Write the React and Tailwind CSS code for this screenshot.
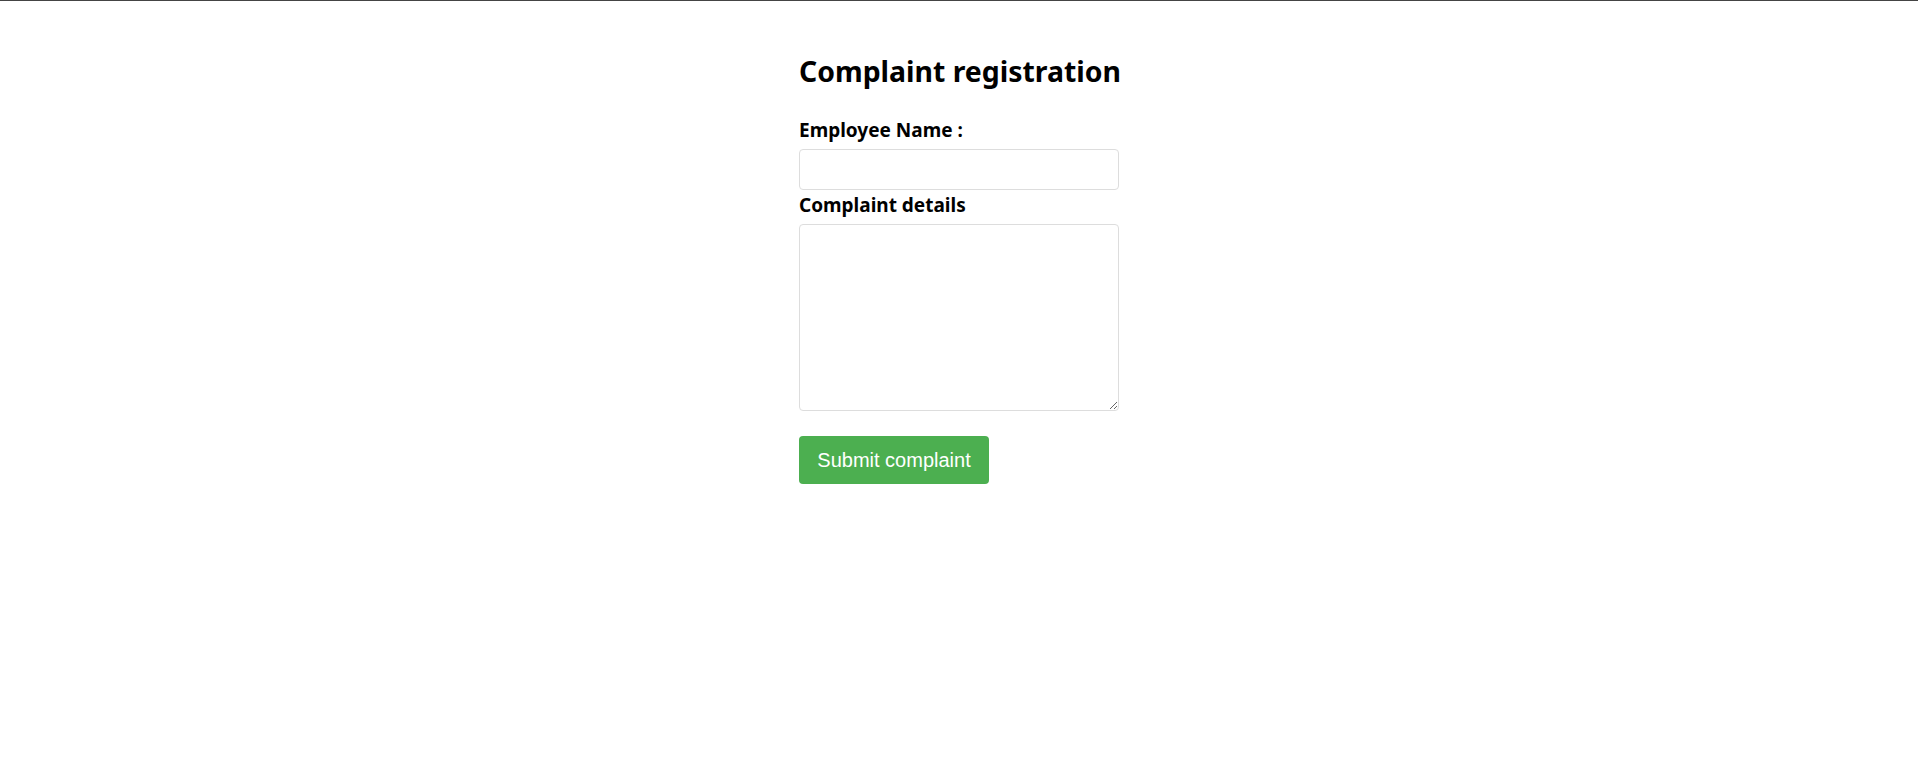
import React, { useState } from "react";

const ComplaintForm = () => {
  const [form, setForm] = useState({ name: "", details: "" });

  const handleSubmit = (e) => {
    e.preventDefault();
  };

  return (
    <div className="min-h-screen bg-white border-t border-[#444444]">
      <form
        onSubmit={handleSubmit}
        className="w-[320px] mx-auto pt-[50px] flex flex-col"
        style={{ fontFamily: '"Noto Sans", "Open Sans", sans-serif' }}
      >
        <h2 className="text-[28.4px] leading-[40px] font-bold text-black mb-[27px] whitespace-nowrap">
          Complaint registration
        </h2>

        <label className="text-[19px] leading-[24px] font-bold text-black">
          Employee Name :
        </label>
        <input
          value={form.name}
          onChange={(e) => setForm({ ...form, name: e.target.value })}
          className="w-full h-[41px] mt-[7px] border border-[#dddddd] rounded-[4px] px-2 outline-none"
        />

        <label className="text-[19px] leading-[24px] font-bold text-black mt-[3px]">
          Complaint details
        </label>
        <textarea
          value={form.details}
          onChange={(e) => setForm({ ...form, details: e.target.value })}
          className="w-full h-[187px] mt-[7px] border border-[#dddddd] rounded-[4px] p-2 outline-none"
        />

        <button
          type="submit"
          className="self-start mt-[25px] h-[48px] w-[190px] bg-[#4caf50] text-white rounded-[4px] text-[20px]"
          style={{ fontFamily: '"Liberation Sans", Arial, sans-serif' }}
        >
          Submit complaint
        </button>
      </form>
    </div>
  );
};

export default function App() {
  return <ComplaintForm />;
}
